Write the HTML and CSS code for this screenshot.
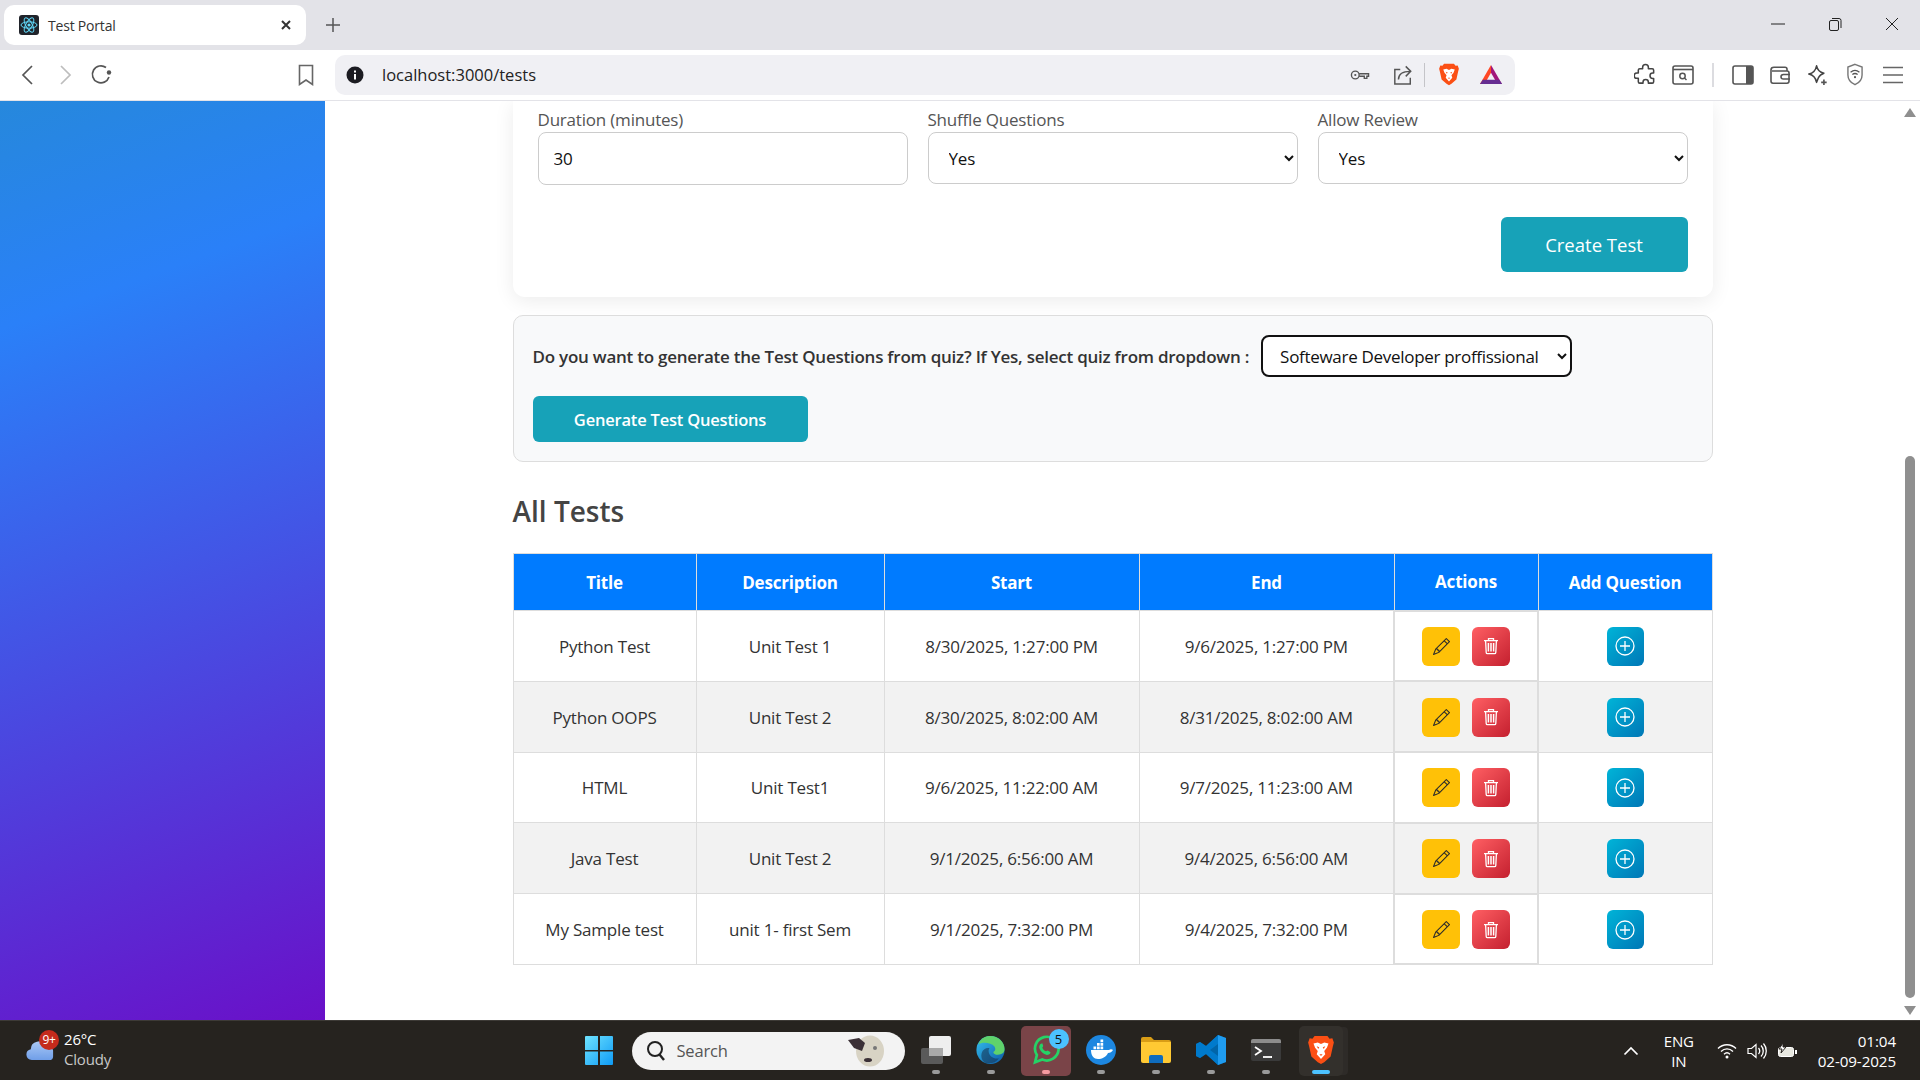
FILE: index.html
```html
<!DOCTYPE html>
<html lang="en">
<head>
  <meta charset="UTF-8">
  <title>Test Portal</title>
  <link rel="stylesheet" href="styles.css">
</head>
<body>

  <svg class="sprite">
    <symbol id="pencil" viewBox="0 0 16 16">
      <path fill="#2b2b2b" d="M12.146.146a.5.5 0 0 1 .708 0l3 3a.5.5 0 0 1 0 .708l-10 10a.5.5 0 0 1-.168.11l-5 2a.5.5 0 0 1-.65-.65l2-5a.5.5 0 0 1 .11-.168l10-10zM11.207 2.5 13.5 4.793 14.793 3.5 12.5 1.207 11.207 2.5zm1.586 3L10.5 3.207 4 9.707V10h.5a.5.5 0 0 1 .5.5v.5h.5a.5.5 0 0 1 .5.5v.5h.293l6.5-6.5zm-9.761 5.175-.106.106-1.528 3.821 3.821-1.528.106-.106A.5.5 0 0 1 5 12.5V12h-.5a.5.5 0 0 1-.5-.5V11h-.5a.5.5 0 0 1-.468-.325z"/>
    </symbol>
    <symbol id="trash" viewBox="0 0 16 18">
      <path fill="none" stroke="#fff" stroke-width="1.3" d="M1 3.6h14M5.5 3.4V1.6h5v1.8M2.6 3.8l.6 11.6c0 .8.6 1.3 1.3 1.3h7c.7 0 1.3-.5 1.3-1.3l.6-11.6"/>
      <path fill="none" stroke="#fff" stroke-width="1.5" d="M5.4 6v8.6M8 6v8.6M10.6 6v8.6"/>
    </symbol>
    <symbol id="plus" viewBox="0 0 20 20">
      <circle cx="10" cy="10" r="9" fill="none" stroke="#fff" stroke-width="1.3"/>
      <path fill="none" stroke="#fff" stroke-width="1.3" d="M10 5v10M5 10h10"/>
    </symbol>
    <symbol id="lion" viewBox="0 0 24 28">
      <path fill="#fb4f14" d="M6 1h12l2 2.4 2.6-.4L24 7l-1 4-2 9-6 5.400-3 1.600-3-1.600L3 20 1 11 0 7l1.400-4L4 3.400z"/>
      <path fill="#fff" d="M5 8l4-1 3 1.500L15 7l4 1-1.500 4L15 15l1 3-4 4.500L8 18l1-3-2.500-3z"/>
      <path fill="#fb4f14" d="M8 10.500l2.400 1-1 1.500zM16 10.500l-2.400 1 1 1.500zM10.500 18h3L12 19.500z"/>
    </symbol>
  </svg>

  <div class="tabstrip">
    <div class="tab">
      <svg class="favicon" viewBox="0 0 20 20">
        <rect width="20" height="20" rx="3" fill="#20232a"/>
        <g fill="none" stroke="#61dafb" stroke-width="1">
          <ellipse cx="10" cy="10" rx="8" ry="3.200"/>
          <ellipse cx="10" cy="10" rx="8" ry="3.200" transform="rotate(60 10 10)"/>
          <ellipse cx="10" cy="10" rx="8" ry="3.200" transform="rotate(120 10 10)"/>
        </g>
        <circle cx="10" cy="10" r="1.600" fill="#61dafb"/>
      </svg>
      <span class="tab-title">Test Portal</span>
      <svg class="tab-close" width="12" height="12" viewBox="0 0 12 12"><path stroke="#333" stroke-width="2" d="M2 2l8 8M10 2l-8 8"/></svg>
    </div>
    <svg class="new-tab" width="16" height="16" viewBox="0 0 16 16"><path stroke="#555" stroke-width="1.500" d="M8 1v14M1 8h14"/></svg>
    <div class="win-controls">
      <span class="win-btn"><svg width="14" height="14" viewBox="0 0 14 14"><path stroke="#222" d="M0 7h14"/></svg></span>
      <span class="win-btn"><svg width="14" height="14" viewBox="0 0 14 14"><rect x="1.500" y="3.500" width="9" height="10" rx="1.500" fill="none" stroke="#222"/><path fill="none" stroke="#222" d="M4 1.500h7a2 2 0 0 1 2 2V11"/></svg></span>
      <span class="win-btn"><svg width="14" height="14" viewBox="0 0 14 14"><path stroke="#222" d="M1 1l12 12M13 1L1 13"/></svg></span>
    </div>
  </div>

  <div class="toolbar">
    <span class="tool tool-nav"><svg width="20" height="24" viewBox="0 0 20 24"><path fill="none" stroke="#555" stroke-width="1.700" d="M14 3L5 12l9 9"/></svg></span>
    <span class="tool tool-nav"><svg width="20" height="24" viewBox="0 0 20 24"><path fill="none" stroke="#bdbdbd" stroke-width="1.700" d="M6 3l9 9-9 9"/></svg></span>
    <span class="tool tool-nav"><svg width="24" height="24" viewBox="0 0 24 24"><path fill="none" stroke="#555" stroke-width="1.700" d="M20 14a8.500 8.500 0 1 1-3-9.500"/><circle cx="20" cy="9.500" r="2.200" fill="#555"/></svg></span>
    <span class="tool tool-bookmark"><svg width="16" height="22" viewBox="0 0 16 22"><path fill="none" stroke="#666" stroke-width="1.600" d="M1.500 1.500h13v19L8 16l-6.500 4.500z"/></svg></span>

    <div class="urlbar">
      <svg class="url-info" width="18" height="18" viewBox="0 0 18 18"><circle cx="9" cy="9" r="8.500" fill="#1c1c22"/><path stroke="#fff" stroke-width="2" d="M9 8v5.500M9 4.500v2"/></svg>
      <span class="url-text">localhost:3000/tests</span>
      <span class="url-icons">
        <svg width="20" height="12" viewBox="0 0 22 14"><circle cx="5.500" cy="7" r="4.500" fill="none" stroke="#555" stroke-width="1.600"/><circle cx="5.500" cy="7" r="1.300" fill="#555"/><path fill="none" stroke="#555" stroke-width="1.600" d="M10 5.500h11v3h-2v2.500h-3V8.500h-6"/></svg>
        <svg class="url-share" width="20" height="20" viewBox="0 0 22 22"><path fill="none" stroke="#555" stroke-width="1.600" d="M8 5H2v16h17v-7M6 16C6 10 10 7 19 7M14 1.500L19.500 7 14 12.500"/></svg>
        <i class="url-sep"></i>
        <svg class="url-lion" width="20" height="23"><use href="#lion"/></svg>
        <svg class="url-bat" width="22" height="19" viewBox="0 0 24 22" preserveAspectRatio="none"><path fill="#ff4724" d="M12 0L0 22h5l7-13z"/><path fill="#a1167a" d="M12 0l12 22h-5L12 9z"/><path fill="#662d91" d="M0 22h24l-3-5H3z"/></svg>
      </span>
    </div>

    <span class="tool tool-first"><svg width="23" height="23" viewBox="0 0 24 24"><path fill="none" stroke="#444" stroke-width="1.600" stroke-linejoin="round" d="M9 4.500a3 3 0 0 1 6 0V6h4a1.500 1.500 0 0 1 1.500 1.500v3h-1a2.800 2.800 0 0 0 0 5.600h1v3.400A1.500 1.500 0 0 1 19 21h-4v-1a2.800 2.800 0 0 0-5.600 0v1H6a1.500 1.500 0 0 1-1.500-1.500V16H3a2.800 2.800 0 0 1 0-5.600h1.500v-3A1.500 1.500 0 0 1 6 6h3z"/></svg></span>
    <span class="tool"><svg width="22" height="20" viewBox="0 0 22 20"><rect x="1" y="1" width="20" height="18" rx="2" fill="none" stroke="#555" stroke-width="1.600"/><path stroke="#555" stroke-width="1.600" d="M1 4.500h20"/><circle cx="10.500" cy="11" r="2.700" fill="none" stroke="#555" stroke-width="1.500"/><path stroke="#555" stroke-width="1.500" d="M12.500 13l2 2"/></svg></span>
    <i class="tool-sep"></i>
    <span class="tool"><svg width="22" height="20" viewBox="0 0 22 20"><rect x="1" y="1" width="20" height="18" rx="2" fill="none" stroke="#555" stroke-width="1.600"/><path fill="#555" d="M14 1h5a2 2 0 0 1 2 2v14a2 2 0 0 1-2 2h-5z"/></svg></span>
    <span class="tool"><svg width="22" height="20" viewBox="0 0 22 22" preserveAspectRatio="none"><path fill="none" stroke="#555" stroke-width="1.600" d="M2 5.500A3 3 0 0 1 5 2.500h11a2 2 0 0 1 2 2v2M2 5.500V18a2 2 0 0 0 2 2h14a2 2 0 0 0 2-2V8.500a2 2 0 0 0-2-2H3M21 10.500h-6.500a2.500 2.500 0 0 0 0 5H21"/></svg></span>
    <span class="tool"><svg width="23" height="22" viewBox="0 0 24 24"><path fill="none" stroke="#444" stroke-width="1.700" stroke-linejoin="round" d="M11 2c1 5 3.500 7 8 8-3 1-5 2.500-6 5l-2 5c-1-5-3.500-8-8.500-9C7.500 10 10 7 11 2z"/><path stroke="#555" stroke-width="1.800" d="M19 17v6M16 20h6"/></svg></span>
    <span class="tool"><svg width="20" height="23" viewBox="0 0 20 26"><path fill="none" stroke="#777" stroke-width="1.600" d="M10 1.500l8 3v9c0 5-3.500 9-8 11-4.500-2-8-6-8-11v-9z"/><path fill="none" stroke="#555" stroke-width="1.400" d="M5 10.500c3-2.500 7-2.500 10 0M7 13c2-1.500 4-1.500 6 0"/><circle cx="10" cy="16" r="1.200" fill="#555"/></svg></span>
    <span class="tool"><svg width="22" height="18" viewBox="0 0 22 18"><path stroke="#666" stroke-width="1.500" d="M1 1.500h20M1 9h20M1 16.500h20"/></svg></span>
  </div>

  <div class="viewport">
    <aside class="sidebar"></aside>

    <main class="main">
      <div class="page">
        <section class="form-card">
          <div class="form-grid">
            <div class="field">
              <label>Duration (minutes)</label>
              <input class="form-input" type="text" value="30">
            </div>
            <div class="field">
              <label>Shuffle Questions</label>
              <select class="form-select"><option>Yes</option></select>
            </div>
            <div class="field">
              <label>Allow Review</label>
              <select class="form-select"><option>Yes</option></select>
            </div>
          </div>
          <div class="form-actions">
            <button class="btn-create">Create Test</button>
          </div>
        </section>

        <section class="generate-box">
          <div class="generate-row">
            <strong class="generate-label">Do you want to generate the Test Questions from quiz? If Yes, select quiz from dropdown :</strong>
            <select class="quiz-select"><option>Softeware Developer proffissional</option></select>
          </div>
          <button class="btn-generate">Generate Test Questions</button>
        </section>

        <h2 class="tests-title">All Tests</h2>

        <table class="tests-table">
          <colgroup>
            <col class="col-title"><col class="col-desc"><col class="col-date"><col class="col-date"><col class="col-actions"><col>
          </colgroup>
          <thead>
            <tr><th>Title</th><th>Description</th><th>Start</th><th>End</th><th>Actions</th><th>Add Question</th></tr>
          </thead>
          <tbody>
            <tr>
              <td>Python Test</td><td>Unit Test 1</td><td>8/30/2025, 1:27:00 PM</td><td>9/6/2025, 1:27:00 PM</td>
              <td class="cell-actions"><button class="icon-btn edit"><svg width="17" height="17"><use href="#pencil"/></svg></button><button class="icon-btn del"><svg width="16" height="18"><use href="#trash"/></svg></button></td>
              <td><button class="icon-btn add"><svg width="20" height="20"><use href="#plus"/></svg></button></td>
            </tr>
            <tr>
              <td>Python OOPS</td><td>Unit Test 2</td><td>8/30/2025, 8:02:00 AM</td><td>8/31/2025, 8:02:00 AM</td>
              <td class="cell-actions"><button class="icon-btn edit"><svg width="17" height="17"><use href="#pencil"/></svg></button><button class="icon-btn del"><svg width="16" height="18"><use href="#trash"/></svg></button></td>
              <td><button class="icon-btn add"><svg width="20" height="20"><use href="#plus"/></svg></button></td>
            </tr>
            <tr>
              <td>HTML</td><td>Unit Test1</td><td>9/6/2025, 11:22:00 AM</td><td>9/7/2025, 11:23:00 AM</td>
              <td class="cell-actions"><button class="icon-btn edit"><svg width="17" height="17"><use href="#pencil"/></svg></button><button class="icon-btn del"><svg width="16" height="18"><use href="#trash"/></svg></button></td>
              <td><button class="icon-btn add"><svg width="20" height="20"><use href="#plus"/></svg></button></td>
            </tr>
            <tr>
              <td>Java Test</td><td>Unit Test 2</td><td>9/1/2025, 6:56:00 AM</td><td>9/4/2025, 6:56:00 AM</td>
              <td class="cell-actions"><button class="icon-btn edit"><svg width="17" height="17"><use href="#pencil"/></svg></button><button class="icon-btn del"><svg width="16" height="18"><use href="#trash"/></svg></button></td>
              <td><button class="icon-btn add"><svg width="20" height="20"><use href="#plus"/></svg></button></td>
            </tr>
            <tr>
              <td>My Sample test</td><td>unit 1- first Sem</td><td>9/1/2025, 7:32:00 PM</td><td>9/4/2025, 7:32:00 PM</td>
              <td class="cell-actions"><button class="icon-btn edit"><svg width="17" height="17"><use href="#pencil"/></svg></button><button class="icon-btn del"><svg width="16" height="18"><use href="#trash"/></svg></button></td>
              <td><button class="icon-btn add"><svg width="20" height="20"><use href="#plus"/></svg></button></td>
            </tr>
          </tbody>
        </table>
      </div>
    </main>

    <div class="scrollbar">
      <i class="arrow-up"></i>
      <i class="thumb"></i>
      <i class="arrow-down"></i>
    </div>
  </div>

  <footer class="taskbar">
    <div class="weather">
      <span class="weather-icon">
        <svg width="31" height="20" viewBox="0 0 32 22" preserveAspectRatio="none"><defs><linearGradient id="cloud" x1="0" y1="0" x2="0" y2="1"><stop offset="0" stop-color="#a9c8f5"/><stop offset="1" stop-color="#6f9ee8"/></linearGradient></defs><path fill="url(#cloud)" d="M7 21a6 6 0 0 1-1-11.800A8.500 8.500 0 0 1 22 5a6 6 0 0 1 7 5.500V17a4 4 0 0 1-4 4z"/></svg>
        <span class="weather-badge">9+</span>
      </span>
      <span class="weather-text"><span>26°C</span><span class="weather-sub">Cloudy</span></span>
    </div>

    <div class="apps">
      <span class="app">
        <svg width="28" height="29" viewBox="0 0 28 29"><defs><linearGradient id="winlogo" x1="0" y1="0" x2="1" y2="1"><stop offset="0" stop-color="#6fe3ff"/><stop offset="1" stop-color="#0f9bf5"/></linearGradient></defs><path fill="url(#winlogo)" d="M0 1a1 1 0 0 1 1-1h12v14H0zM15 0h12a1 1 0 0 1 1 1v13H15zM0 15.500h13V29H1a1 1 0 0 1-1-1zM15 15.500h13V28a1 1 0 0 1-1 1H15z"/></svg>
      </span>
      <div class="search-pill">
        <svg width="20" height="22" viewBox="0 0 20 22"><circle cx="9" cy="9" r="7" fill="none" stroke="#222" stroke-width="2"/><path stroke="#222" stroke-width="2.400" d="M13.500 14.500l4.500 5.500"/></svg>
        <span class="search-text">Search</span>
        <svg class="search-art" width="38" height="32" viewBox="0 0 38 32"><ellipse cx="23" cy="16" rx="14" ry="15.500" fill="#d8d3c4"/><path fill="#3b3036" d="M1 5l11-2 6 5-3 8-8-3z"/><ellipse cx="21" cy="25" rx="4" ry="2" fill="#3b3036"/><circle cx="28" cy="13" r="2" fill="#777"/></svg>
      </div>
      <span class="app">
        <svg width="30" height="28" viewBox="0 0 30 28"><rect x="0" y="12" width="22" height="16" rx="2" fill="#5a5a5a"/><rect x="8" y="0" width="22" height="20" rx="2" fill="#eeeeee"/><rect x="8" y="12" width="14" height="8" fill="#a9a9a9"/></svg>
        <i class="app-dot"></i>
      </span>
      <span class="app">
        <svg width="31" height="30" viewBox="0 4 32 32"><defs><linearGradient id="edge" x1="0" y1="0" x2="1" y2="1"><stop offset="0" stop-color="#35c1f1"/><stop offset="1" stop-color="#0c59a4"/></linearGradient></defs><circle cx="16" cy="20" r="15" fill="url(#edge)"/><path fill="#5fd26b" d="M3 14C6 6 12 5 16 5c8 0 15 6 15 14 0 4-3 6-7 6-3 0-5-1-5-3 2-1 3-3 1-6-3-4-13-5-17-2z"/><path fill="#16314f" d="M14 21c0 5 5 9 11 8-3 4-8 6-13 5C7 33 5 27 7 22c1-3 5-5 8-4-1 1-1 2-1 3z" opacity=".55"/></svg>
        <i class="app-dot"></i>
      </span>
      <span class="app app-active">
        <svg width="31" height="30" viewBox="0 3 33 33"><path fill="none" stroke="#25d366" stroke-width="3" d="M5 33l2-8a13 13 0 1 1 6 5z"/><path fill="#25d366" d="M11 13c-1 1-2 3-1 5 1 3 4 6 8 7 2 0 4-1 4-3l-3-2-2 1c-2-1-3-2-4-4l1-2-1-3z"/></svg>
        <span class="app-badge">5</span>
        <i class="app-dot app-dot-pink"></i>
      </span>
      <span class="app">
        <svg width="30" height="30" viewBox="0 0 30 30"><circle cx="15" cy="15" r="15" fill="#1d87e0"/><path fill="#fff" d="M5 15h18c1-1 3-1 4 0-1 2-3 3-5 3-2 4-6 6-10 6-4 0-7-3-7-9z"/><path fill="#fff" d="M7.500 11.500h2.700v2.700H7.500zM11 11.500h2.700v2.700H11zM14.500 11.500h2.700v2.700h-2.700zM11 8h2.700v2.700H11zM14.500 8h2.700v2.700h-2.700zM14.500 4.500h2.700v2.700h-2.700z"/></svg>
        <i class="app-dot"></i>
      </span>
      <span class="app">
        <svg width="30" height="26" viewBox="0 0 30 26"><path fill="#d99d16" d="M0 2a2 2 0 0 1 2-2h8l3 3h15a2 2 0 0 1 2 2v4H0z"/><path fill="#ffc933" d="M0 5h30v19a2 2 0 0 1-2 2H2a2 2 0 0 1-2-2z"/><path fill="#0f6cbd" d="M8 20a2 2 0 0 1 2-2h10a2 2 0 0 1 2 2v6H8z"/></svg>
        <i class="app-dot"></i>
      </span>
      <span class="app">
        <svg width="30" height="30" viewBox="0 0 30 30"><path fill="#0065a9" d="M22 0l8 3v24l-8 3-12-11-6 4-4-2V9l4-2 6 4z"/><path fill="#007acc" d="M22 0v9l-8 6 8 6v9L10 19l-6 4-4-2V9l4-2 6 4z"/><path fill="#1f9cf0" d="M22 0l8 3v24l-8 3z"/></svg>
        <i class="app-dot"></i>
      </span>
      <span class="app">
        <svg width="30" height="22" viewBox="0 0 30 22"><rect width="30" height="22" rx="2" fill="#3a3a3a"/><path fill="#8c8c8c" d="M0 2a2 2 0 0 1 2-2h26a2 2 0 0 1 2 2v2H0z"/><path fill="none" stroke="#fff" stroke-width="1.800" d="M4 8l6 4-6 4"/><path stroke="#fff" stroke-width="1.800" d="M12 18h9"/></svg>
        <i class="app-dot"></i>
      </span>
      <span class="app app-open">
        <svg width="26" height="30"><use href="#lion"/></svg>
        <i class="app-dot app-dot-blue"></i>
      </span>
    </div>

    <div class="tray">
      <svg class="tray-chevron" width="16" height="10" viewBox="0 0 16 10"><path fill="none" stroke="#fff" stroke-width="1.700" d="M1.500 8.500L8 2l6.500 6.500"/></svg>
      <span class="tray-lang"><span>ENG</span><span>IN</span></span>
      <svg width="20" height="16" viewBox="0 0 20 16"><g fill="none" stroke="#fff" stroke-width="1.400"><path d="M1 5.500c5-5 13-5 18 0M4 8.500c3.500-3.500 8.500-3.500 12 0M7 11.200c2-1.800 4-1.800 6 0"/></g><circle cx="10" cy="14" r="1.500" fill="#fff"/></svg>
      <svg width="20" height="18" viewBox="0 0 20 18"><path fill="none" stroke="#fff" stroke-width="1.200" d="M1 6.500h3.500L9 2.500v13l-4.500-4H1z"/><path fill="none" stroke="#fff" stroke-width="1.300" d="M11.500 6c1.500 1.800 1.500 4.200 0 6M14 3.500c3 3 3 8 0 11M16.500 1.500c3.700 4.300 3.700 10.700 0 15"/></svg>
      <svg width="20" height="16" viewBox="0 0 20 16"><rect x="1.500" y="4.500" width="15" height="9" rx="2" fill="#e8e8e0" stroke="#fff"/><rect x="18" y="7" width="2" height="4" fill="#fff"/><path fill="#fff" stroke="#26231f" d="M6 0L2 6h3L4 10l5-6H6z"/></svg>
      <span class="tray-clock"><span>01:04</span><span>02-09-2025</span></span>
    </div>
  </footer>

</body>
</html>
```

FILE: styles.css
```css
* { box-sizing: border-box; }
html, body { margin: 0; height: 100%; }
body { width: 1920px; height: 1080px; overflow: hidden; display: flex; flex-direction: column; font-family: "Open Sans", "Noto Sans", sans-serif; color: #333; background: #fff; }
svg { display: block; flex: none; }
.sprite { display: none; }

/* browser chrome */
.tabstrip { height: 50px; background: #e3e3e8; display: flex; align-items: flex-start; }
.tab { width: 302px; height: 40px; margin: 5px 0 0 4px; background: #fff; border-radius: 10px; display: flex; align-items: center; padding: 0 14px 0 15px; }
.favicon { width: 20px; height: 20px; }
.tab-title { margin-left: 9px; font-size: 14px; letter-spacing: -.2px; color: #333; flex: 1; }
.new-tab { margin: 17px 0 0 19px; }
.win-controls { margin-left: auto; display: flex; height: 48px; }
.win-btn { width: 57px; display: flex; align-items: center; justify-content: center; }

.toolbar { height: 51px; background: #fff; border-bottom: 1px solid #e3e3e8; display: flex; align-items: center; padding: 0 0 1px 10px; }
.tool { width: 37.5px; height: 40px; display: flex; align-items: center; justify-content: center; }
.tool-nav { width: 36.500px; }
.tool-bookmark { margin-left: 168px; }
.urlbar { width: 1180px; height: 40px; margin-left: 10px; background: #f0f0f4; border-radius: 10px; display: flex; align-items: center; padding: 0 13px 0 11px; }
.url-text { margin-left: 18px; font-size: 16.500px; color: #222; }
.url-icons { margin-left: auto; display: flex; align-items: center; }
.url-share { margin-left: 23px; }
.url-sep { width: 1px; height: 24px; background: #c4c4c8; margin: 0 14.500px 0 11px; }
.url-bat { margin-left: 21px; }
.tool-first { margin-left: 112px; }
.tool-sep { width: 2px; height: 24px; background: #dcdce0; margin: 0 10px 0 10px; }

/* page */
.viewport { flex: 1; display: flex; min-height: 0; }
.sidebar { width: 325px; background: linear-gradient(160deg, #2688dc 0%, #2a80f8 22%, #6a10c8 100%); }
.main { flex: 1; overflow: hidden; }
.page { width: 1200px; margin: 0 auto; }

.form-card { background: #fff; border-radius: 0 0 12px 12px; box-shadow: 0 4px 20px rgba(0,0,0,.08); padding: 7px 25px 25px; }
.form-grid { display: grid; grid-template-columns: repeat(3, 1fr); gap: 20px; }
.field label { display: block; font-size: 17px; line-height: 24px; letter-spacing: -.2px; color: #555; }
.form-input { display: block; width: 100%; height: 53px; padding: 0 15px; border: 1px solid #ccc; border-radius: 8px; font: 17px "Open Sans", sans-serif; letter-spacing: -.2px; color: #111; }
.form-select { display: block; width: 100%; height: 52px; padding: 0 16px; border: 1px solid #ccc; border-radius: 8px; background: #fff; font: 17px "Open Sans", sans-serif; letter-spacing: -.2px; color: #111; }
.form-actions { display: flex; justify-content: flex-end; margin-top: 32px; }
.btn-create { width: 187px; height: 55px; border: none; border-radius: 6px; background: #17a2b8; color: #fff; font: 18.500px "Open Sans", sans-serif; }

.generate-box { margin-top: 18px; height: 147px; padding: 19px 19px; background: #f8f9fa; border: 1px solid #ddd; border-radius: 10px; }
.generate-row { display: flex; align-items: center; height: 42px; }
.generate-label { font-size: 17px; font-weight: 600; letter-spacing: -.24px; color: #333; white-space: nowrap; }
.quiz-select { width: 311px; height: 42px; margin-left: 12px; padding: 0 13px; border: 2px solid #111; border-radius: 8px; background: #fff; font: 17px "Open Sans", sans-serif; letter-spacing: -.3px; color: #111; }
.btn-generate { display: block; width: 275px; height: 46px; margin-top: 19px; border: none; border-radius: 6px; background: #17a2b8; color: #fff; font: 600 16.500px "Open Sans", sans-serif; letter-spacing: -.2px; }

.tests-title { margin: 29px 0 22px; font-size: 28px; line-height: 40px; font-weight: 600; color: #444; }

.tests-table { width: 1200px; table-layout: fixed; border-collapse: collapse; font-size: 17px; letter-spacing: -.2px; text-align: center; }
.col-title { width: 183px; }
.col-desc { width: 188px; }
.col-date { width: 255px; }
.col-actions { width: 144px; }
.tests-table th { height: 57px; padding: 0; background: #007bff; border: 1px solid #ddd; color: #fff; font-weight: 700; }
.tests-table td { height: 70.800px; padding: 1px 0 0; border: 1px solid #ddd; color: #333; }
.tests-table tbody tr:nth-child(even) { background: #f2f2f2; }
.tests-table td.cell-actions { border-width: 2px; }
.icon-btn { display: inline-flex; align-items: center; justify-content: center; height: 39px; border: none; border-radius: 6px; padding: 0; vertical-align: middle; }
.edit { width: 38px; background: #ffc107; }
.del { width: 38px; margin-left: 12px; background: linear-gradient(135deg, #ff5f63, #c4202f); }
.add { width: 37px; background: linear-gradient(135deg, #00b4d8, #0077b6); }

.scrollbar { width: 20px; display: flex; flex-direction: column; align-items: center; padding: 7px 0 5px; background: #fff; }
.arrow-up { width: 0; height: 0; border: 6px solid transparent; border-top: 0; border-bottom: 9px solid #8f8f8f; }
.arrow-down { width: 0; height: 0; border: 6px solid transparent; border-bottom: 0; border-top: 9px solid #8f8f8f; }
.thumb { width: 10px; height: 542px; margin: auto 0 8px; background: #8f8f8f; border-radius: 5px; }

/* windows taskbar */
.taskbar { height: 60px; background: #26231f; border-top: 1px solid #3d3a36; display: flex; align-items: center; color: #fff; position: relative; }
.weather { width: 571px; display: flex; align-items: center; padding-left: 25px; }
.weather-icon { position: relative; width: 31px; height: 20px; }
.weather-badge { position: absolute; top: -11px; left: 14px; width: 20px; height: 20px; border-radius: 50%; background: #c42b1c; font-size: 12px; line-height: 20px; text-align: center; color: #fff; letter-spacing: -.3px; }
.weather-text { display: flex; flex-direction: column; margin: -3px 0 0 8px; font-size: 15px; line-height: 20px; letter-spacing: -.2px; }
.weather-sub { color: #c8c8c8; }

.apps { display: flex; align-items: center; height: 100%; }
.app { position: relative; width: 55px; height: 50px; display: flex; align-items: center; justify-content: center; padding-bottom: 1px; }
.app-active { width: 50px; margin: 0 2.500px; background: #7a4448; border-radius: 5px; }
.app-open { width: 44px; margin-left: 5.500px; background: #33302c; border-radius: 5px; box-shadow: 6px 0 0 -1px #2e2b28; }
.app-dot { position: absolute; bottom: 2px; left: 50%; width: 8px; height: 4px; margin-left: -4px; border-radius: 2px; background: #9a9a9a; }
.app-dot-pink { background: #f59aa0; }
.app-dot-blue { width: 18px; margin-left: -9px; background: #4cc2ff; }
.app-badge { position: absolute; top: 3px; right: 2px; width: 20px; height: 20px; border-radius: 50%; background: #4cc2ff; color: #111; font-size: 13px; line-height: 20px; text-align: center; }
.search-pill { width: 273px; height: 38px; margin: 0 3.500px 0 5.500px; background: #f3f3f3; border-radius: 19px; display: flex; align-items: center; padding: 0 20px 0 14px; }
.search-text { margin-left: 11px; font-size: 16.500px; letter-spacing: -.2px; color: #555; }
.search-art { margin-left: auto; }

.tray { margin-left: auto; display: flex; align-items: center; gap: 10px; padding-right: 24px; font-size: 15px; line-height: 20px; }
.tray-chevron { margin-right: 15px; }
.tray-lang { display: flex; flex-direction: column; align-items: center; margin-right: 13px; letter-spacing: -.2px; }
.tray-clock { display: flex; flex-direction: column; align-items: flex-end; margin-left: 11px; font-size: 15.200px; letter-spacing: -.1px; }
```
